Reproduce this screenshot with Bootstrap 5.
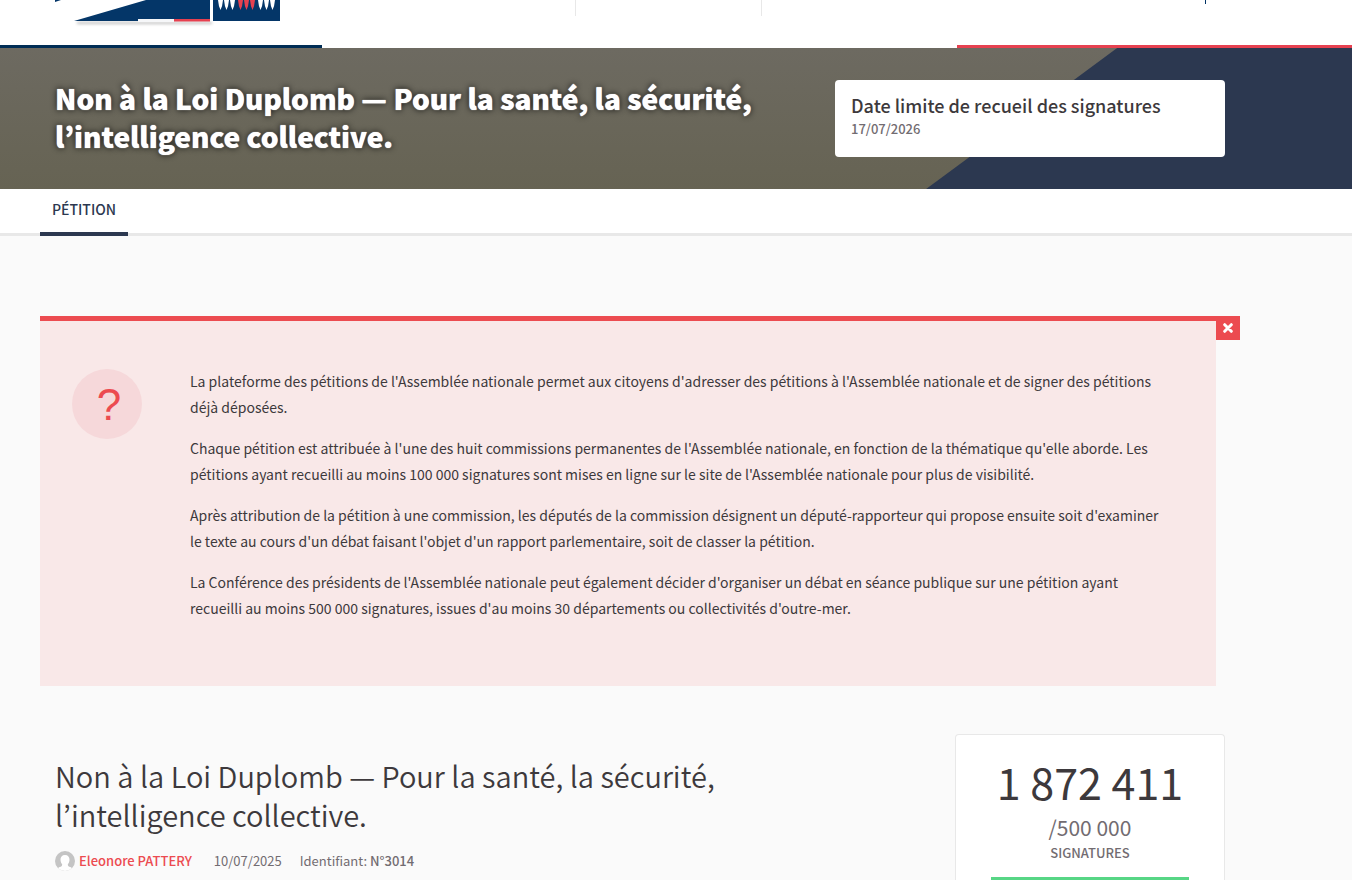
<!DOCTYPE html>
<html lang="fr">
<head>
<meta charset="utf-8">
<meta name="viewport" content="width=device-width, initial-scale=1">
<title>Non à la Loi Duplomb</title>
<link href="https://cdn.jsdelivr.net/npm/bootstrap@5.3.0/dist/css/bootstrap.min.css" rel="stylesheet">
<style>
  body { background: #fafafa; color: #3d393c; font-family: "Noto Sans CJK JP", "Open Sans", sans-serif; font-size: 14px; line-height: 26px; }
  .wrap { max-width: 1240px; padding-left: 40px; }
  .inset { padding-left: 15px; padding-right: 15px; }
  .site-top { height: 45px; }
  .logo { width: 225px; height: 28px; }
  .sep-nav { width: 187px; height: 16px; margin-left: 295px; border: solid #e8e8e8; border-width: 0 1px; }
  .sep-dark { width: 1px; height: 4px; background: #003366; margin-right: 19px; }
  .stripes { height: 3px; }
  .stripe-blue { width: 23.8%; background: #002d55; }
  .stripe-red { width: 29.2%; background: #e64150; }
  .hero { background: linear-gradient(#6d6a61, #666353); }
  .hero-slant { width: 31.5%; background: #2c3850; clip-path: polygon(191px 0, 100% 0, 100% 100%, 0 100%); }
  .hero h1 { font-size: 28px; font-weight: 900; line-height: 38px; margin: 7px 0 0; color: #fff; text-shadow: 0 0 1px #fff, 0 0 6px rgba(0,0,0,.9); }
  .date-col { width: 35%; }
  .date-box { border-radius: 4px; padding: 12px 16px 18px; }
  .date-box h2 { font-size: 18px; font-weight: 500; line-height: 26px; }
  .muted { color: #726c71; font-size: 13px; line-height: 21px; }
  .strong { font-weight: 500; }
  .tabs { border-bottom: 3px solid #e8e8e8; }
  .tabs a { line-height: 24px; padding: 8px 12px 11px; margin-bottom: -3px; border-bottom: 4px solid #2c3850; color: #2c3850; font-weight: 500; }
  .notice { width: 98%; background: #f9e8e8; border-top: 5px solid #ec4b50; margin-top: 80px; padding: 47px 46px 50px 32px; gap: 48px; }
  .notice p { margin-bottom: 15px; }
  .q-icon { width: 70px; height: 70px; margin-top: 1px; padding-left: 4px; background: #f6d8da; color: #ec4b50; font: 44px/72px "Liberation Sans", sans-serif; }
  .close-btn { width: 24px; height: 24px; top: -5px; left: 100%; background: #ec4b50; }
  .article-row { margin-top: 48px; }
  .article-row h2 { font-size: 29px; font-weight: 350; line-height: 39px; margin: 22px 0 16px; }
  .meta { gap: 18px; }
  .author { color: #ec4b50; font-weight: 500; }
  .count-col { width: 25%; }
  .count-box { border: 1px solid #e8e8e8; border-bottom: 0; border-radius: 4px 4px 0 0; padding: 15px 35px 0; }
  .count { font-size: 43px; line-height: 62px; }
  .goal { font-size: 21px; line-height: 30px; color: #726c71; }
  .count-bar { height: 3px; background: #57d685; margin-top: 14px; }
</style>
</head>
<body>
<header class="bg-white">
  <div class="wrap">
    <div class="inset site-top d-flex align-items-start">
      <a href="#" aria-label="Assemblée nationale">
        <svg class="logo d-block" viewBox="0 0 225 28">
          <defs><filter id="soft" x="0" y="-10" width="225" height="50" filterUnits="userSpaceOnUse"><feGaussianBlur stdDeviation="1.5"/></filter></defs>
          <path d="M22 22h135v2H22z" fill="#bbb" filter="url(#soft)"/>
          <path d="M0 0h6L0 2zM91 0h64v21H19z" fill="#043668"/>
          <path d="M83 19h36v3H83z" fill="#f6f7f9"/><path d="M119 19h36v2.500H119z" fill="#e64150"/>
          <path d="M158 0h67v21h-67z" fill="#043668"/>
          <path d="M163 0h5q-.5 6-2.500 10-2-4-2.500-10zM169 0h5q-.5 6-2.500 10-2-4-2.500-10zM175 0h5q-.5 6-2.500 10-2-4-2.500-10zM203 0h5q-.5 6-2.500 10-2-4-2.500-10zM209 0h5q-.5 6-2.500 10-2-4-2.500-10zM215 0h5q-.5 6-2.500 10-2-4-2.500-10z" fill="#fff"/>
          <path d="M183 0h5q-.5 6-2.500 10-2-4-2.500-10zM189 0h5q-.5 6-2.500 10-2-4-2.500-10zM195 0h5q-.5 6-2.500 10-2-4-2.500-10z" fill="#e64150"/>
        </svg>
      </a>
      <div class="sep-nav"></div>
      <div class="sep-dark ms-auto"></div>
    </div>
  </div>
  <div class="stripes d-flex justify-content-between"><div class="stripe-blue"></div><div class="stripe-red"></div></div>
</header>

<section class="hero position-relative">
  <div class="hero-slant position-absolute top-0 bottom-0 end-0"></div>
  <div class="wrap position-relative">
    <div class="d-flex py-4">
      <h1 class="inset flex-fill">Non à la Loi Duplomb — Pour la santé, la sécurité, l’intelligence collective.</h1>
      <div class="date-col inset flex-shrink-0 py-2">
        <div class="date-box bg-white">
          <h2 class="mb-0">Date limite de recueil des signatures</h2>
          <div class="muted strong">17/07/2026</div>
        </div>
      </div>
    </div>
  </div>
</section>

<nav class="tabs bg-white">
  <div class="wrap d-flex"><a href="#" class="text-decoration-none">PÉTITION</a></div>
</nav>

<main class="wrap">
  <section class="notice d-flex position-relative">
    <div class="q-icon rounded-circle text-center flex-shrink-0">?</div>
    <div>
      <p>La plateforme des pétitions de l'Assemblée nationale permet aux citoyens d'adresser des pétitions à l'Assemblée nationale et de signer des pétitions déjà déposées.</p>
      <p>Chaque pétition est attribuée à l'une des huit commissions permanentes de l'Assemblée nationale, en fonction de la thématique qu'elle aborde. Les pétitions ayant recueilli au moins 100 000 signatures sont mises en ligne sur le site de l'Assemblée nationale pour plus de visibilité.</p>
      <p>Après attribution de la pétition à une commission, les députés de la commission désignent un député-rapporteur qui propose ensuite soit d'examiner le texte au cours d'un débat faisant l'objet d'un rapport parlementaire, soit de classer la pétition.</p>
      <p>La Conférence des présidents de l'Assemblée nationale peut également décider d'organiser un débat en séance publique sur une pétition ayant recueilli au moins 500 000 signatures, issues d'au moins 30 départements ou collectivités d'outre-mer.</p>
    </div>
    <button type="button" class="close-btn position-absolute border-0 p-0 d-flex align-items-center justify-content-center" aria-label="Fermer">
      <svg width="10" height="10" viewBox="0 0 10 10" stroke="#fff" stroke-width="3" stroke-linecap="round"><path d="M1.700 1.700l6.600 6.600M8.300 1.700L1.700 8.300"/></svg>
    </button>
  </section>

  <div class="article-row d-flex">
    <article class="inset flex-fill">
      <h2 class="col-10">Non à la Loi Duplomb — Pour la santé, la sécurité, l’intelligence collective.</h2>
      <div class="meta muted d-flex align-items-center">
        <a href="#" class="author d-flex align-items-center text-decoration-none gap-1 me-1">
          <svg width="20" height="20" viewBox="0 0 20 20"><defs><clipPath id="round"><circle cx="10" cy="10" r="10"/></clipPath></defs><g clip-path="url(#round)"><path d="M0 0h20v20H0z" fill="#c4c4c4"/><path d="M10 4c3 0 4.700 2 4.500 5-.1 2-.8 3.300-1.700 4.200 0 1.800 1 2.300 2.400 2.800 1.400.5 2.800 1.500 3 4H1.800c.2-2.500 1.600-3.500 3-4 1.400-.5 2.400-1 2.400-2.800C6.300 12.300 5.600 11 5.500 9 5.300 6 7 4 10 4z" fill="#fff"/></g></svg>
          <span>Eleonore PATTERY</span>
        </a>
        <span>10/07/2025</span>
        <span>Identifiant: <span class="strong">N°3014</span></span>
      </div>
    </article>
    <aside class="count-col inset flex-shrink-0">
      <div class="count-box bg-white text-center">
        <div class="count text-nowrap">1 872 411</div>
        <div class="goal">/500 000</div>
        <div class="muted strong">SIGNATURES</div>
        <div class="count-bar"></div>
      </div>
    </aside>
  </div>
</main>
<script src="https://cdn.jsdelivr.net/npm/bootstrap@5.3.0/dist/js/bootstrap.bundle.min.js"></script>
</body>
</html>
